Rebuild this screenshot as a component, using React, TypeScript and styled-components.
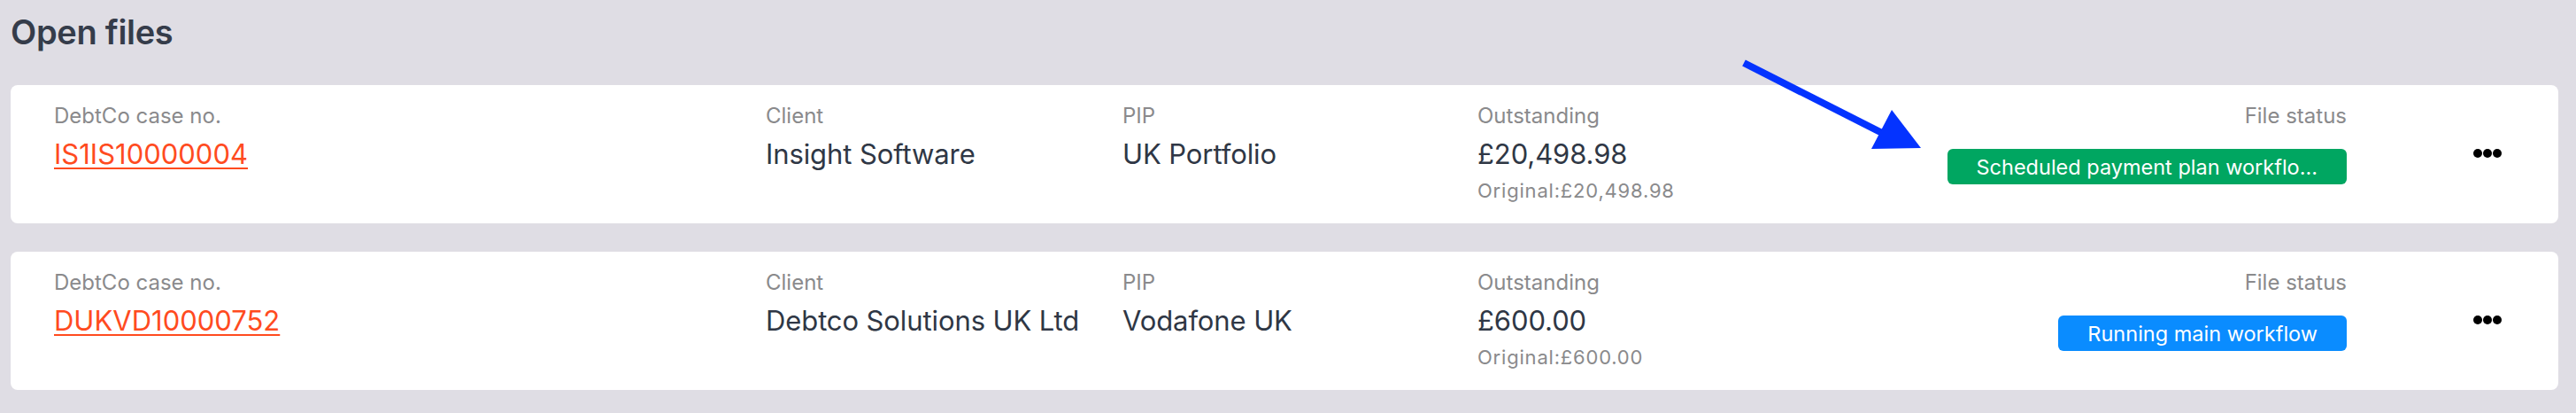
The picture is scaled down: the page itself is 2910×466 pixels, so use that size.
import React from "react";
import styled, { createGlobalStyle } from "styled-components";

const GlobalStyle = createGlobalStyle`
  html, body {
    margin: 0;
    padding: 0;
    background: #dfdde4;
    font-family: Inter, "Noto Sans", "Liberation Sans", sans-serif;
  }
  * { box-sizing: border-box; }
`;

const Page = styled.div`
  position: relative;
  width: 2910px;
  height: 466px;
  padding: 13px 20px 0 12px;
  background: #dfdde4;
  overflow: hidden;
`;

const Title = styled.h1`
  margin: 0 0 37px 0;
  font-size: 38px;
  line-height: 46px;
  font-weight: 600;
  color: #353c4a;
  letter-spacing: -0.3px;
`;

const List = styled.div`
  display: flex;
  flex-direction: column;
  gap: 32px;
`;

const Card = styled.div`
  display: grid;
  grid-template-columns: 804px 403px 401px 1fr auto auto;
  align-items: start;
  height: 156px;
  padding: 21px 64px 23px 49px;
  background: #ffffff;
  border-radius: 8px;
`;

const Field = styled.div<{ $align?: "left" | "right" }>`
  display: flex;
  flex-direction: column;
  align-items: ${(p) => (p.$align === "right" ? "flex-end" : "flex-start")};
`;

const Label = styled.div`
  font-size: 24px;
  line-height: 28px;
  color: #8a8a8c;
  white-space: nowrap;
`;

const Value = styled.div`
  margin-top: 11px;
  font-size: 31px;
  line-height: 36px;
  letter-spacing: -0.1px;
  color: #2f3745;
  white-space: nowrap;
`;

const CaseLink = styled.a`
  margin-top: 11px;
  font-size: 31px;
  line-height: 36px;
  color: #ff4b1f;
  text-decoration: underline;
  text-decoration-thickness: 2px;
  text-underline-offset: 4px;
  white-space: nowrap;
  cursor: pointer;
`;

const SubValue = styled.div`
  margin-top: 9px;
  font-size: 22px;
  line-height: 28px;
  letter-spacing: 0.8px;
  color: #8a8a8c;
  white-space: nowrap;
`;

const Badge = styled.div<{ $tone: "green" | "blue" }>`
  margin-top: 23px;
  height: 40px;
  padding: 0 33px;
  display: flex;
  align-items: center;
  border-radius: 6px;
  background: ${(p) => (p.$tone === "green" ? "#00a661" : "#0a8cff")};
  color: #ffffff;
  font-size: 23.5px;
  white-space: nowrap;
`;

const MoreButton = styled.button`
  align-self: center;
  margin-left: 143px;
  padding: 0;
  border: none;
  background: transparent;
  display: flex;
  align-items: center;
  cursor: pointer;
`;

const ArrowOverlay = styled.svg`
  position: absolute;
  left: 0;
  top: 0;
  pointer-events: none;
`;

type Row = {
  caseNo: string;
  client: string;
  pip: string;
  outstanding: string;
  original: string;
  status: string;
  tone: "green" | "blue";
};

const rows: Row[] = [
  {
    caseNo: "IS1IS10000004",
    client: "Insight Software",
    pip: "UK Portfolio",
    outstanding: "£20,498.98",
    original: "Original:£20,498.98",
    status: "Scheduled payment plan workflo...",
    tone: "green",
  },
  {
    caseNo: "DUKVD10000752",
    client: "Debtco Solutions UK Ltd",
    pip: "Vodafone UK",
    outstanding: "£600.00",
    original: "Original:£600.00",
    status: "Running main workflow",
    tone: "blue",
  },
];

const Dots = () => (
  <svg width="32" height="10" viewBox="0 0 32 10">
    <circle cx="5" cy="5" r="5" fill="#000" />
    <circle cx="16" cy="5" r="5" fill="#000" />
    <circle cx="27" cy="5" r="5" fill="#000" />
  </svg>
);

export default function App() {
  return (
    <>
      <GlobalStyle />
      <Page>
        <Title>Open files</Title>
        <List>
          {rows.map((r) => (
            <Card key={r.caseNo}>
              <Field>
                <Label>DebtCo case no.</Label>
                <CaseLink>{r.caseNo}</CaseLink>
              </Field>
              <Field>
                <Label>Client</Label>
                <Value>{r.client}</Value>
              </Field>
              <Field>
                <Label>PIP</Label>
                <Value>{r.pip}</Value>
              </Field>
              <Field>
                <Label>Outstanding</Label>
                <Value>{r.outstanding}</Value>
                <SubValue>{r.original}</SubValue>
              </Field>
              <Field $align="right">
                <Label>File status</Label>
                <Badge $tone={r.tone}>{r.status}</Badge>
              </Field>
              <MoreButton aria-label="More actions">
                <Dots />
              </MoreButton>
            </Card>
          ))}
        </List>
        <ArrowOverlay width="2910" height="466" viewBox="0 0 2910 466">
          <line
            x1="1970"
            y1="71"
            x2="2130"
            y2="152"
            stroke="#0433ff"
            strokeWidth="8"
          />
          <polygon points="2137,124 2114,168 2170,167" fill="#0433ff" />
        </ArrowOverlay>
      </Page>
    </>
  );
}
